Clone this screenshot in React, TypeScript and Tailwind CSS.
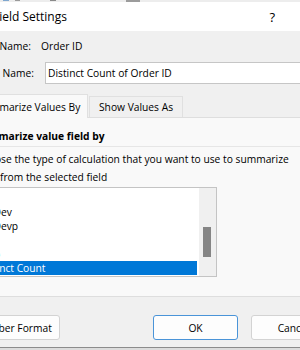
import React from "react";

export default function App() {
  return (
    <div className="w-[300px] h-[350px] overflow-hidden bg-[#f0f0f0] text-black font-['Open_Sans',sans-serif] text-[10.25px] leading-[14px]">
      {/* strip of the sheet behind */}
      <div className="h-[2px] bg-[#ededed] flex items-start">
        <span className="ml-[3px] w-[6px] h-[1px] bg-[#7fa7cf]" />
        <span className="ml-[6px] w-[5px] h-[1px] bg-[#9a9a9a]" />
        <span className="ml-[30px] w-[6px] h-[1px] bg-[#8a8a8a]" />
        <span className="ml-[70px] w-[14px] h-[2px] bg-[#9c9c9c]" />
      </div>

      {/* title bar */}
      <div className="h-[29px] bg-white flex items-center">
        <span className="ml-[-7px] text-[12px] leading-[16px] whitespace-nowrap">Field Settings</span>
        <span className="ml-auto mr-[25px] text-[13px] leading-[16px]">?</span>
      </div>

      {/* source name */}
      <div className="flex mt-[8px] h-[14px] items-center whitespace-nowrap">
        <span className="ml-[-36px] w-[77px] shrink-0">Source Name:</span>
        <span>Order ID</span>
      </div>

      {/* custom name */}
      <div className="flex mt-[9px] items-center whitespace-nowrap">
        <span className="ml-[-37px] w-[82px] shrink-0">Custom Name:</span>
        <div className="h-[22px] w-[280px] shrink-0 bg-white border border-[#c6c6c6] flex items-center pl-[2px]">
          Distinct Count of Order ID
        </div>
      </div>

      {/* tabs */}
      <div className="flex items-end mt-[10px] h-[23px] whitespace-nowrap">
        <div className="ml-[-32px] w-[120px] h-[24px] mb-[-1px] relative z-10 shrink-0 bg-[#f9f9f9] border border-b-0 border-[#e0e0e0] flex items-center pl-[9px]">
          Summarize Values By
        </div>
        <div className="ml-[1px] w-[94px] h-[21px] shrink-0 bg-[#f0f0f0] border border-b-0 border-[#e0e0e0] flex items-center justify-center">
          Show Values As
        </div>
      </div>

      {/* tab panel */}
      <div className="h-[180px] bg-[#f9f9f9] border-t border-b border-[#dedede] flex flex-col whitespace-nowrap">
        <div className="mt-[11px] ml-[-24px] font-bold">Summarize value field by</div>
        <div className="mt-[3px] h-px bg-[#e6e6e6]" />
        <div className="mt-[5px] ml-[-24px]">
          Choose the type of calculation that you want to use to summarize
        </div>
        <div className="mt-[4px] ml-[-24px]">data from the selected field</div>

        <div className="mt-[3px] ml-[-28px] w-[245px] h-[90px] bg-white border border-[#c4c4c4] flex">
          <div className="flex-1 pt-[3px] pr-[2px] flex flex-col">
            <div className="h-[14px] pl-[5px]">Min</div>
            <div className="h-[14px] pl-[5px]">StdDev</div>
            <div className="h-[14px] pl-[5px]">StdDevp</div>
            <div className="h-[14px] pl-[5px]">Var</div>
            <div className="h-[14px] pl-[5px]">Varp</div>
            <div className="h-[14px] pl-[5px] bg-[#0078d7] text-white">Distinct Count</div>
          </div>
          <div className="w-[17px] shrink-0 bg-[#f0f0f0] pt-[39px]">
            <div className="ml-[4px] w-[8px] h-[30px] bg-[#858585]" />
          </div>
        </div>
      </div>

      {/* buttons */}
      <div className="flex mt-[18px] h-[25px] whitespace-nowrap">
        <div className="ml-[-37px] w-[97px] shrink-0 bg-[#fdfdfd] border border-[#d3d3d3] rounded-[3px] flex items-center pl-[11px]">
          Number Format
        </div>
        <div className="ml-[93px] w-[85px] shrink-0 bg-[#fdfdfd] border border-[#4a94d8] rounded-[3px] flex items-center justify-center">
          OK
        </div>
        <div className="ml-[13px] w-[85px] shrink-0 bg-[#fdfdfd] border border-[#d3d3d3] rounded-[3px] flex items-center justify-center">
          Cancel
        </div>
      </div>

      {/* sheet behind */}
      <div className="mt-[7px] h-[3px] border-t border-[#8c8c8c] bg-[#dcdcdc]" />
    </div>
  );
}
